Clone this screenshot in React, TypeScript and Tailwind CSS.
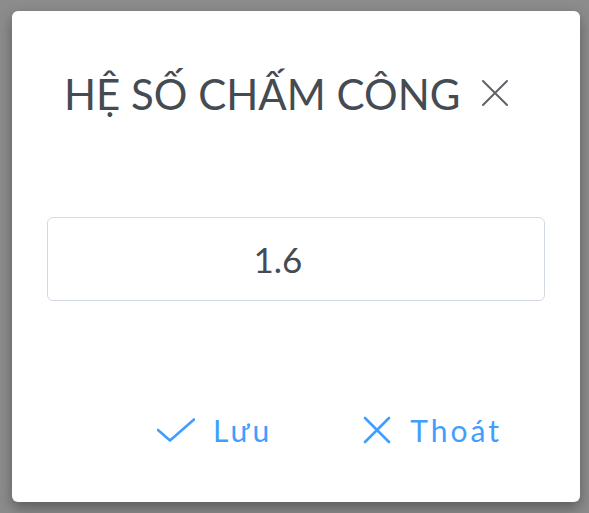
import React from 'react';

const CheckIcon = () => (
  <svg width="38" height="24" viewBox="0 0 38 24" fill="none">
    <polyline
      points="1,12 13,22.5 37,1.5"
      stroke="currentColor"
      strokeWidth="2.6"
      strokeLinecap="round"
      strokeLinejoin="round"
    />
  </svg>
);

const CloseIcon = ({ stroke = 2.6 }: { stroke?: number }) => (
  <svg width="28" height="28" viewBox="0 0 28 28" fill="none">
    <path
      d="M2 2 L26 26 M26 2 L2 26"
      stroke="currentColor"
      strokeWidth={stroke}
      strokeLinecap="round"
    />
  </svg>
);

const App = () => {
  return (
    <div className="h-[513px] w-[589px] overflow-hidden bg-[#8c8c8c] pl-[12px] pt-[11px] font-['Lato','Liberation_Sans',sans-serif]">
      <div className="flex h-[491px] w-[568px] flex-col rounded-[6px] bg-white pt-[62px] shadow-[0_6px_14px_rgba(0,0,0,0.35)]">
        {/* title */}
        <div className="flex items-center pl-[52px]">
          <span className="text-[42px] leading-none text-[#454b52]">
            HỆ SỐ CHẤM CÔNG
          </span>
          <span className="ml-[21px] mt-[-2px] text-[#5f6368]">
            <CloseIcon stroke={2} />
          </span>
        </div>

        {/* value */}
        <div className="mx-[35px] mt-[102px] flex h-[84px] items-center justify-center rounded-[6px] border border-[#d3dae2] pr-[36px]">
          <span className="text-[35px] leading-none text-[#454b52]">1.6</span>
        </div>

        {/* actions */}
        <div className="mt-[114px] flex items-center pl-[145px] text-[30px] leading-none text-[#409eff]">
          <button className="flex items-center">
            <CheckIcon />
            <span className="ml-[18px] tracking-[3px]">Lưu</span>
          </button>
          <button className="ml-[91px] flex items-center">
            <CloseIcon />
            <span className="ml-[19px] tracking-[3px]">Thoát</span>
          </button>
        </div>
      </div>
    </div>
  );
};

export default App;
